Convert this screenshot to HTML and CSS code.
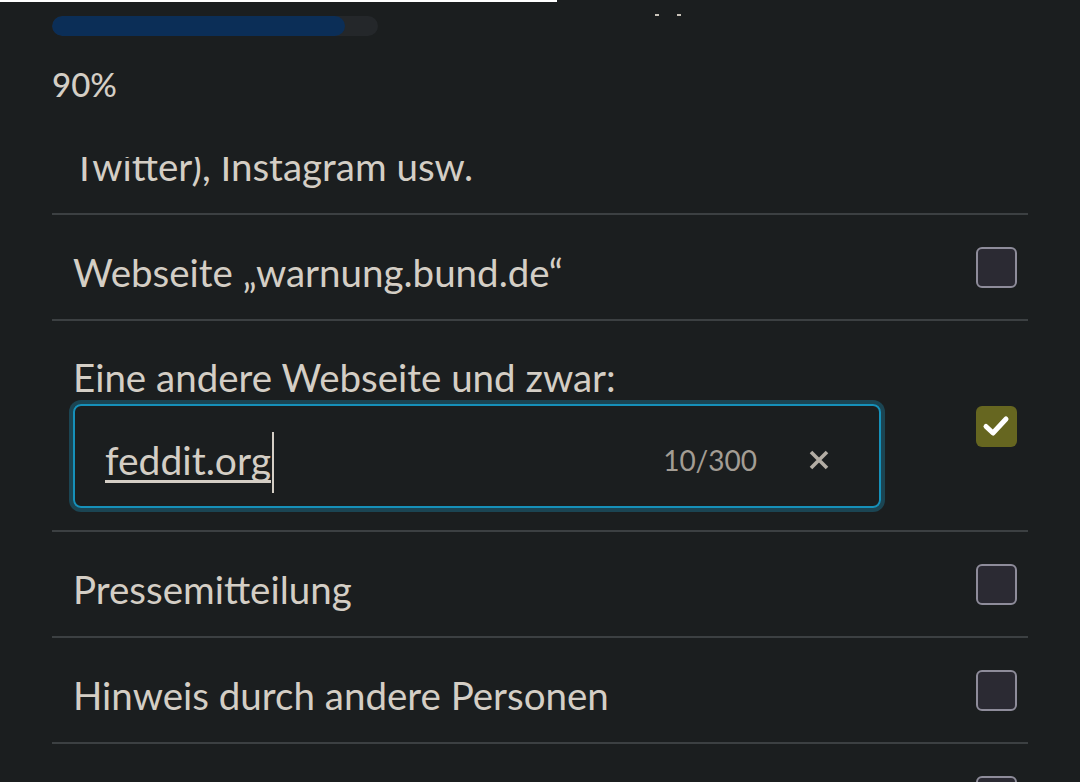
FILE: index.html
```html
<!DOCTYPE html>
<html lang="de">
<head>
<meta charset="utf-8">
<link rel="stylesheet" href="styles.css">
</head>
<body>
<div class="page">
  <header class="head">
    <div class="topline"></div>
    <div class="progress-row">
      <div class="progress"><div class="progress-fill" style="width: 90%"></div></div>
      <div class="dots"><span></span><span></span></div>
    </div>
    <div class="percent">90%</div>
  </header>

  <div class="list">
    <div class="row row-clipped">
      <div class="label clipped">Twitter), Instagram usw.</div>
    </div>
    <div class="row">
      <div class="label">Webseite „warnung.bund.de“</div>
      <span class="check"></span>
    </div>
    <div class="row row-tall">
      <div class="col">
        <div class="label">Eine andere Webseite und zwar:</div>
        <div class="input">
          <span class="value">feddit.org</span><span class="caret"></span>
          <span class="count">10/300</span>
          <svg class="clear" width="22" height="22" viewBox="0 0 22 22"><path d="M3 3 L19 19 M19 3 L3 19" stroke="#b3ada4" stroke-width="3.6" stroke-linecap="butt"/></svg>
        </div>
      </div>
      <span class="check checked"><svg width="40" height="40" viewBox="0 0 40 40"><path d="M10 20.5 L17 27 L30 13" fill="none" stroke="#ffffff" stroke-width="5" stroke-linecap="round" stroke-linejoin="round"/></svg></span>
    </div>
    <div class="row">
      <div class="label">Pressemitteilung</div>
      <span class="check"></span>
    </div>
    <div class="row">
      <div class="label">Hinweis durch andere Personen</div>
      <span class="check"></span>
    </div>
    <div class="row">
      <div class="label"></div>
      <span class="check"></span>
    </div>
  </div>
</div>
</body>
</html>
```

FILE: styles.css
```css
html, body {
  margin: 0;
  padding: 0;
  background: #1b1e1f;
}
body {
  font-family: Lato, "Noto Sans", sans-serif;
  color: #d4cec5;
  overflow: hidden;
  height: 782px;
}
.page {
  width: 1080px;
}
.head {
  height: 157px;
}
.topline {
  width: 557px;
  height: 2px;
  background: #ffffff;
}
.progress-row {
  display: flex;
  align-items: flex-start;
  margin-top: 12px;
  padding-left: 52px;
}
.progress {
  width: 326px;
  height: 20px;
  margin-top: 2px;
  border-radius: 10px;
  background: #24272a;
  overflow: hidden;
}
.progress-fill {
  height: 100%;
  background: #0b2e57;
  border-radius: 10px;
}
.dots {
  display: flex;
  gap: 18px;
  margin-left: 277px;
}
.dots span {
  width: 4px;
  height: 2px;
  background: #c9c3b9;
}
.percent {
  margin-top: 28px;
  padding-left: 52px;
  font-size: 33px;
  line-height: 40px;
  font-weight: 500;
  color: #d4cec5;
}
.list {
  margin-left: 52px;
  width: 976px;
}
.row {
  display: flex;
  align-items: center;
  justify-content: space-between;
  box-sizing: border-box;
  min-height: 106px;
  padding: 22px 11px 22px 21px;
  border-bottom: 2px solid #3c4042;
}
.row-clipped {
  min-height: 0;
  height: 58px;
  padding: 0 11px 0 21px;
  align-items: flex-start;
  overflow: hidden;
}
.row-tall {
  padding: 23px 11px 22px 21px;
}
.label {
  font-size: 38.5px;
  line-height: 44px;
  padding: 9px 0 0 0;
  color: #d4cec5;
}
.label.clipped {
  padding-top: 0;
  margin-top: -13px;
}
.col {
  display: flex;
  flex-direction: column;
  gap: 5px;
}
.col .label {
  padding-top: 11px;
}
.input {
  box-sizing: border-box;
  width: 808px;
  height: 104px;
  border: 2px solid #1690b9;
  border-radius: 8px;
  box-shadow: 0 0 0 4px #1b4553;
  display: flex;
  align-items: center;
  padding: 8px 49px 0 30px;
}
.value {
  font-size: 39px;
  line-height: 44px;
  text-decoration: underline;
  text-decoration-thickness: 2.5px;
  text-decoration-skip-ink: none;
  text-underline-offset: 5px;
  color: #d4cec5;
}
.caret {
  width: 2px;
  height: 61px;
  margin-left: 1px;
  margin-top: 4px;
  background: #d4cec5;
}
.count {
  margin-left: auto;
  font-size: 28px;
  color: #a39d94;
  margin-right: 51px;
}
.clear {
  display: block;
}
.check {
  box-sizing: border-box;
  width: 41px;
  height: 41px;
  flex: none;
  border: 2px solid #8e8c9a;
  border-radius: 6px;
  background: #2b2a33;
}
.check.checked {
  border: none;
  background: #666620;
}
.check svg {
  display: block;
}
```
